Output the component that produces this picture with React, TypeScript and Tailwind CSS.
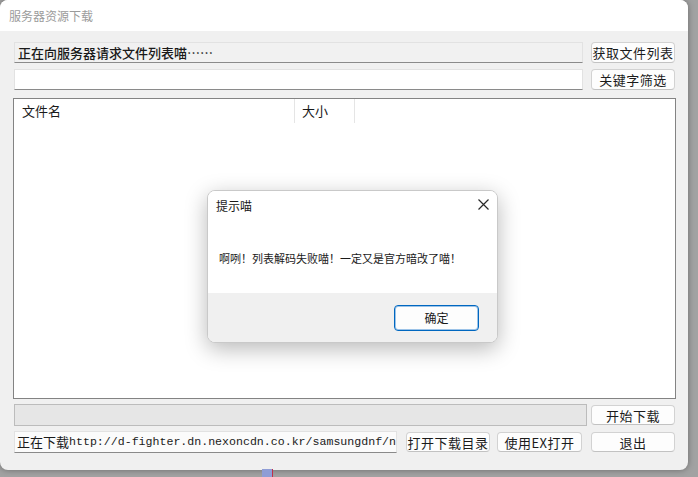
import React from "react";

const cjk = { fontFamily: '"Noto Sans CJK SC", "Noto Sans", sans-serif' };
const mono = { fontFamily: '"Liberation Mono", "DejaVu Sans Mono", monospace' };

function Btn({ label, className = "" }: { label: string; className?: string }) {
  return (
    <div
      className={
        "flex items-center justify-center rounded-[4px] border border-[#d2d2d2] border-b-[#c2c2c2] bg-[#fdfdfd] text-[13px] leading-none text-[#1b1b1b] tracking-[0.5px] " +
        className
      }
    >
      {label}
    </div>
  );
}

export default function App() {
  return (
    <div className="relative h-[477px] w-[698px] overflow-hidden bg-[#a2a2a2]" style={cjk}>
      {/* taskbar-ish fragment below */}
      <div className="absolute left-[262px] top-[469px] h-[8px] w-[10px] bg-[#8f9dd6]" />
      <div className="absolute left-[272px] top-[469px] h-[8px] w-[1px] bg-[#c0304a]" />

      {/* main window */}
      <div className="flex h-[470px] w-[688px] flex-col overflow-hidden rounded-[8px] bg-[#f0f0f0] shadow-[0_0_6px_rgba(0,0,0,0.35)]">
        <div className="flex h-[31px] items-center bg-white pl-[9px] text-[12px] text-[#9b9b9b]">
          服务器资源下载
        </div>
        <div className="flex flex-1 flex-col pl-[14px] pt-[11px]">
          {/* row 1 */}
          <div className="flex h-[21px] items-stretch">
            <div className="flex w-[569px] items-center border border-[#e2e2e2] border-b-[#8a8a8a] bg-[#f1f1f1] pl-[3px] text-[13px] font-medium text-[#1a1a1a]">
              正在向服务器请求文件列表喵……
            </div>
            <Btn label="获取文件列表" className="ml-[8px] w-[84px]" />
          </div>
          {/* row 2 */}
          <div className="mt-[6px] flex h-[21px] items-stretch">
            <div className="w-[569px] border border-[#e2e2e2] border-b-[#8a8a8a] bg-white" />
            <Btn label="关键字筛选" className="ml-[8px] w-[84px]" />
          </div>
          {/* list */}
          <div className="-ml-px mt-[8px] h-[301px] w-[663px] border border-[#838383] bg-white">
            <div className="flex h-[24px] items-center text-[13px] text-[#1a1a1a]">
              <div className="flex h-full w-[281px] items-center border-r border-[#e5e5e5] pl-[8px]">文件名</div>
              <div className="flex h-full w-[60px] items-center border-r border-[#e5e5e5] pl-[7px]">大小</div>
            </div>
          </div>
          {/* progress row */}
          <div className="mt-[5px] flex h-[22px] items-center">
            <div className="h-[22px] w-[573px] border border-[#bcbcbc] bg-[#e6e6e6]" />
            <Btn label="开始下载" className="ml-[4px] h-[20px] w-[84px]" />
          </div>
          {/* bottom row */}
          <div className="mt-[5px] flex h-[22px] items-center">
            <div className="flex h-[22px] w-[383px] items-center overflow-hidden whitespace-nowrap border border-[#e2e2e2] border-b-[#8a8a8a] bg-[#fbfbfb] pl-[2px] text-[13px] text-[#1a1a1a]">
              <span>正在下载</span>
              <span className="text-[11.6px]" style={mono}>
                http://d-fighter.dn.nexoncdn.co.kr/samsungdnf/n
              </span>
            </div>
            <Btn label="打开下载目录" className="ml-[9px] h-[20px] w-[84px]" />
            <Btn label="使用EX打开" className="ml-[7px] h-[20px] w-[85px]" />
            <Btn label="退出" className="ml-[9px] h-[20px] w-[84px]" />
          </div>
        </div>
      </div>

      {/* dialog */}
      <div className="absolute left-[207px] top-[190px] flex h-[153px] w-[291px] flex-col overflow-hidden rounded-[8px] border border-[#c9c9c9] bg-white shadow-[0_6px_22px_rgba(0,0,0,0.28)]">
        <div className="relative h-[102px] bg-white">
          <div className="absolute left-[8px] top-[6px] text-[12px] leading-[18px] text-[#1a1a1a]">提示喵</div>
          <svg
            className="absolute left-[270px] top-[8px]"
            width="11"
            height="11"
            viewBox="0 0 11 11"
            fill="none"
            stroke="#2a2a2a"
            strokeWidth="1.2"
          >
            <path d="M0.5 0.5 L10.5 10.5 M10.5 0.5 L0.5 10.5" />
          </svg>
          <div className="absolute left-[11px] top-[58px] text-[11px] leading-[18px] text-[#1a1a1a]">
            啊咧！列表解码失败喵！一定又是官方暗改了喵！
          </div>
        </div>
        <div className="flex flex-1 items-start justify-end bg-[#f0f0f0] pr-[18px] pt-[12px]">
          <div className="flex h-[26px] w-[85px] items-center justify-center rounded-[4px] border border-[#0067c0] bg-[#fdfdfd] text-[12px] text-[#1a1a1a] shadow-[inset_0_0_0_1px_#9cc3e8]">
            确定
          </div>
        </div>
      </div>
    </div>
  );
}
